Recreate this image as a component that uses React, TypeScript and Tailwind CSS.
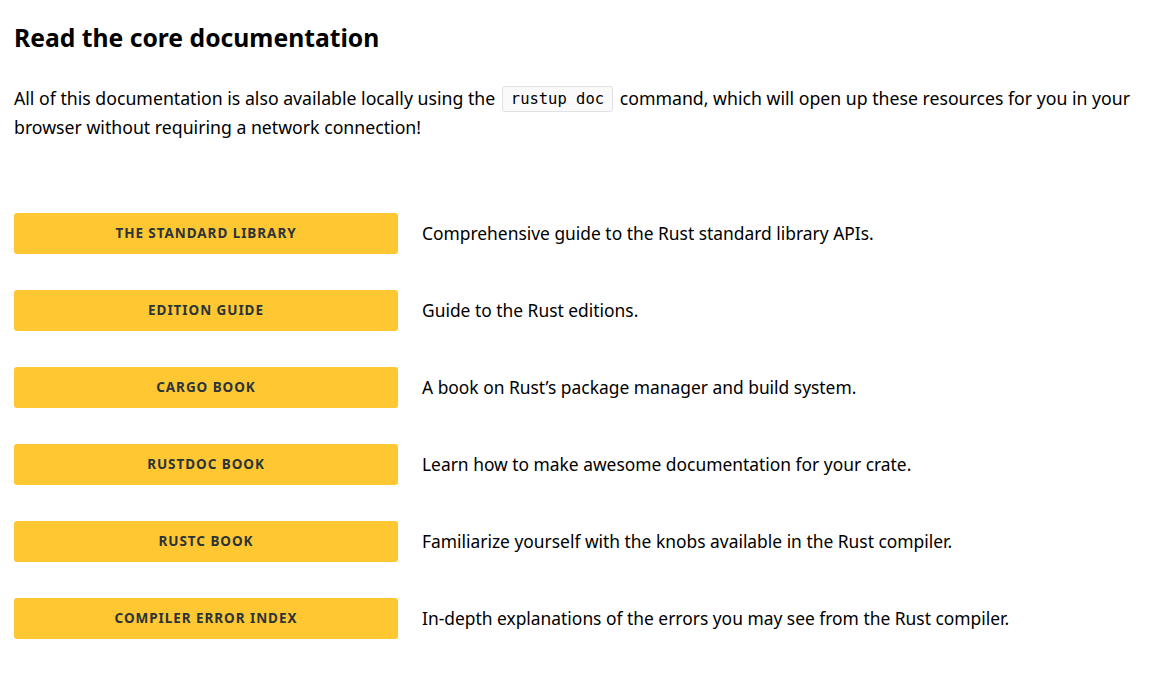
const rows = [
  ["THE STANDARD LIBRARY", "Comprehensive guide to the Rust standard library APIs."],
  ["EDITION GUIDE", "Guide to the Rust editions."],
  ["CARGO BOOK", "A book on Rust\u2019s package manager and build system."],
  ["RUSTDOC BOOK", "Learn how to make awesome documentation for your crate."],
  ["RUSTC BOOK", "Familiarize yourself with the knobs available in the Rust compiler."],
  ["COMPILER ERROR INDEX", "In-depth explanations of the errors you may see from the Rust compiler."],
];

export default function App() {
  return (
    <div className="w-[1162px] h-[683px] bg-white text-black px-[14px] pt-[20px] font-['Noto_Sans',sans-serif] overflow-hidden">
      <h2 className="text-[24.7px] leading-[36px] font-bold">Read the core documentation</h2>
      <p className="mt-[28px] text-[17.7px] leading-[29px] w-[1120px]">
        All of this documentation is also available locally using the{" "}
        <code className="inline-block align-middle font-['DejaVu_Sans_Mono',monospace] text-[15.5px] leading-[20px] px-[8px] py-[2px] border border-[#e1e1e1] bg-[#fafafa] rounded-[3px] mx-[2px] -mt-[3px]">rustup doc</code>{" "}
        command, which will open up these resources for you in your browser without requiring a network connection!
      </p>
      <div className="mt-[71px] flex flex-col gap-[36px]">
        {rows.map(([b, d]) => (
          <div key={b} className="flex items-center gap-[24px]">
            <a className="w-[384px] h-[41px] flex items-center justify-center bg-[#ffc832] rounded-[3px] text-[#2a3439] font-bold text-[13.5px] tracking-[0.07em]">
              {b}
            </a>
            <span className="text-[17.4px]">{d}</span>
          </div>
        ))}
      </div>
    </div>
  );
}
